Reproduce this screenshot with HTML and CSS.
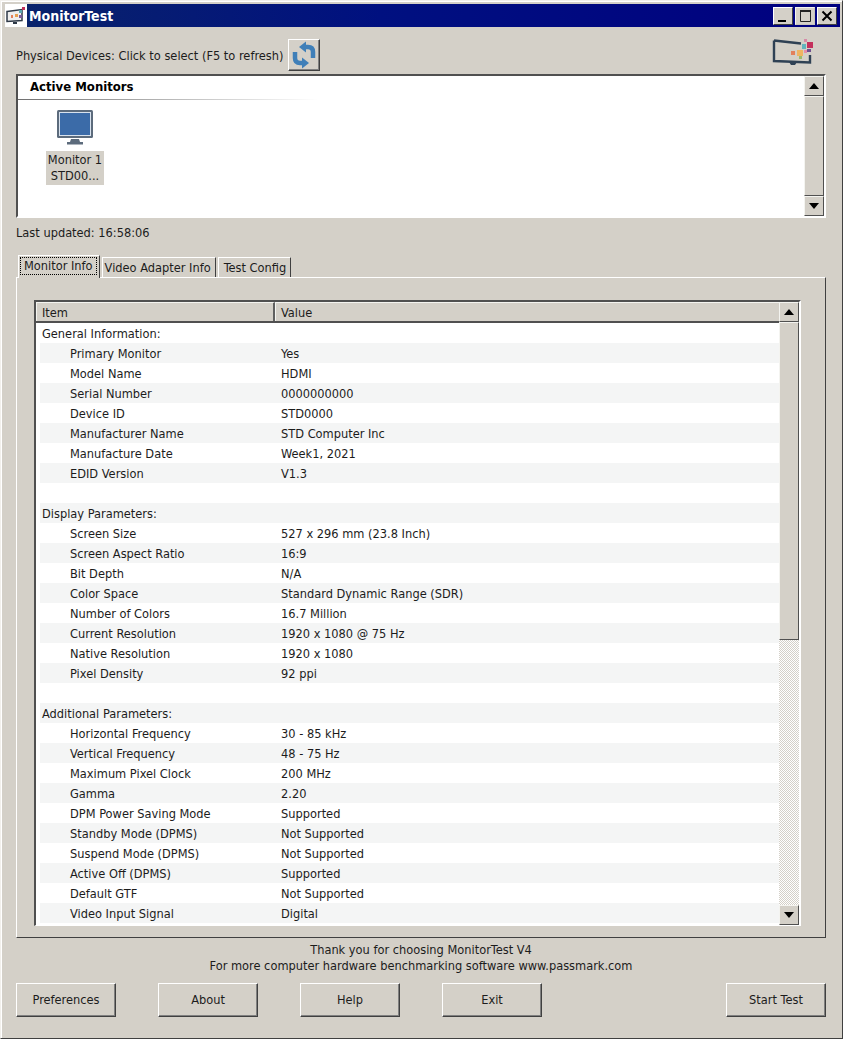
FILE: index.html
```html
<!DOCTYPE html>
<html lang="en">
<head>
<meta charset="utf-8">
<title>MonitorTest</title>
<link rel="stylesheet" href="styles.css">
</head>
<body>
<div class="window">
  <header class="titlebar">
    <svg class="app-icon" viewBox="0 0 22 23" width="22" height="23"><rect width="22" height="23" fill="#fff"/><path d="M2 7.500l15-2v11l-15 1z" fill="#eee" stroke="#2f3a48" stroke-width="1.500"/><path d="M8 18h4v2h-4z" fill="#2f3a48"/><rect x="17" y="3" width="3" height="3" fill="#c2315a"/><rect x="14" y="6" width="3" height="3" fill="#5aa7b0"/><rect x="10" y="10" width="3" height="3" fill="#e8a050"/><rect x="14" y="11" width="3" height="3" fill="#7a5a9a"/><rect x="6" y="11" width="2" height="3" fill="#e2805c"/></svg>
    <span class="title">MonitorTest</span>
    <div class="win-btns">
      <button class="win-btn"><svg viewBox="0 0 16 14" width="16" height="14"><rect x="3" y="11" width="8" height="2" fill="#000"/></svg></button>
      <button class="win-btn flat"><svg viewBox="0 0 16 16" width="16" height="16"><path d="M3.500 2.500h10v11h-10z" fill="none" stroke="#222"/><rect x="3" y="2" width="11" height="2" fill="#222"/></svg></button>
      <button class="win-btn"><svg viewBox="0 0 16 14" width="16" height="14"><path d="M3.500 2.500l9 9M12.500 2.500l-9 9" stroke="#000" stroke-width="2" fill="none"/></svg></button>
    </div>
  </header>

  <main class="content">
    <div class="device-row">
      <span class="device-label">Physical Devices: Click to select (F5 to refresh)</span>
      <button class="refresh">
        <svg viewBox="0 0 28 28" width="28" height="28"><path d="M23 17V11Q23 6 18 6H14" fill="none" stroke="#3f7fb8" stroke-width="4.500"/><path d="M16 0.500L9 6l7 5.500z" fill="#3f7fb8"/><path d="M5 11V17Q5 22 10 22H14" fill="none" stroke="#3f7fb8" stroke-width="4.500"/><path d="M12 16.500L19 22l-7 5.500z" fill="#3f7fb8"/></svg>
      </button>
      <svg class="logo" viewBox="0 0 44 30" width="44" height="30"><path d="M2 3.500L29 6.500M38 18v7.500L2 24V3.500" fill="none" stroke="#2f4154" stroke-width="2.400"/><path d="M17 25h8l-2 3h-4z" fill="#2f4154"/><rect x="35" y="5" width="6" height="6" fill="#c4305c"/><rect x="30" y="7" width="4" height="5" fill="#62b3bd"/><rect x="32" y="2" width="3" height="3" fill="#d88aa8"/><rect x="35" y="12" width="4" height="3" fill="#6f4f8f"/><rect x="25" y="13" width="6" height="6" fill="#efb462"/><rect x="19" y="14" width="4" height="4" fill="#e2805c"/><rect x="32" y="13" width="3" height="3" fill="#e58ca8"/><rect x="27" y="19" width="3" height="3" fill="#9dbb6a"/></svg>
    </div>

    <section class="monitors">
      <div class="monitors-list">
        <h2 class="group-head">Active Monitors</h2>
        <div class="group-line"></div>
        <div class="monitor-item">
          <svg viewBox="0 0 36 36" width="36" height="36"><rect width="36" height="28" rx="1.500" fill="#5c6b7c"/><rect x="2.500" y="2.500" width="31" height="23" fill="#3b6ba8" stroke="#d8e2ee"/><path d="M14 29h8l1 3h-10z" fill="#5c6b7c"/><rect x="10" y="32" width="16" height="2.500" fill="#5c6b7c"/></svg>
          <div class="monitor-name">Monitor 1<br>STD00...</div>
        </div>
      </div>
      <div class="scrollbar">
        <button class="sb-btn"><span class="arrow up"></span></button>
        <div class="sb-thumb"></div>
        <button class="sb-btn"><span class="arrow down"></span></button>
      </div>
    </section>

    <p class="updated">Last updated: 16:58:06</p>

    <nav class="tabs">
      <div class="tab active"><span class="focus">Monitor Info</span></div>
      <div class="tab">Video Adapter Info</div>
      <div class="tab">Test Config</div>
    </nav>

    <section class="panel">
      <div class="table">
        <div class="table-main">
          <div class="thead">
            <div class="th item">Item</div>
            <div class="th value">Value</div>
          </div>
          <div class="rows">
            <div class="row"><span class="k head">General Information:</span><span class="v"></span></div>
            <div class="row"><span class="k">Primary Monitor</span><span class="v">Yes</span></div>
            <div class="row"><span class="k">Model Name</span><span class="v">HDMI</span></div>
            <div class="row"><span class="k">Serial Number</span><span class="v">0000000000</span></div>
            <div class="row"><span class="k">Device ID</span><span class="v">STD0000</span></div>
            <div class="row"><span class="k">Manufacturer Name</span><span class="v">STD Computer Inc</span></div>
            <div class="row"><span class="k">Manufacture Date</span><span class="v">Week1, 2021</span></div>
            <div class="row"><span class="k">EDID Version</span><span class="v">V1.3</span></div>
            <div class="row"><span class="k"></span><span class="v"></span></div>
            <div class="row"><span class="k head">Display Parameters:</span><span class="v"></span></div>
            <div class="row"><span class="k">Screen Size</span><span class="v">527 x 296 mm (23.8 Inch)</span></div>
            <div class="row"><span class="k">Screen Aspect Ratio</span><span class="v">16:9</span></div>
            <div class="row"><span class="k">Bit Depth</span><span class="v">N/A</span></div>
            <div class="row"><span class="k">Color Space</span><span class="v">Standard Dynamic Range (SDR)</span></div>
            <div class="row"><span class="k">Number of Colors</span><span class="v">16.7 Million</span></div>
            <div class="row"><span class="k">Current Resolution</span><span class="v">1920 x 1080 @ 75 Hz</span></div>
            <div class="row"><span class="k">Native Resolution</span><span class="v">1920 x 1080</span></div>
            <div class="row"><span class="k">Pixel Density</span><span class="v">92 ppi</span></div>
            <div class="row"><span class="k"></span><span class="v"></span></div>
            <div class="row"><span class="k head">Additional Parameters:</span><span class="v"></span></div>
            <div class="row"><span class="k">Horizontal Frequency</span><span class="v">30 - 85 kHz</span></div>
            <div class="row"><span class="k">Vertical Frequency</span><span class="v">48 - 75 Hz</span></div>
            <div class="row"><span class="k">Maximum Pixel Clock</span><span class="v">200 MHz</span></div>
            <div class="row"><span class="k">Gamma</span><span class="v">2.20</span></div>
            <div class="row"><span class="k">DPM Power Saving Mode</span><span class="v">Supported</span></div>
            <div class="row"><span class="k">Standby Mode (DPMS)</span><span class="v">Not Supported</span></div>
            <div class="row"><span class="k">Suspend Mode (DPMS)</span><span class="v">Not Supported</span></div>
            <div class="row"><span class="k">Active Off (DPMS)</span><span class="v">Supported</span></div>
            <div class="row"><span class="k">Default GTF</span><span class="v">Not Supported</span></div>
            <div class="row"><span class="k">Video Input Signal</span><span class="v">Digital</span></div>
          </div>
        </div>
        <div class="scrollbar checker">
          <button class="sb-btn"><span class="arrow up"></span></button>
          <div class="sb-thumb tall"></div>
          <div class="sb-track"></div>
          <button class="sb-btn"><span class="arrow down"></span></button>
        </div>
      </div>
    </section>

    <p class="thanks">Thank you for choosing MonitorTest V4<br>For more computer hardware benchmarking software www.passmark.com</p>

    <div class="actions">
      <button class="btn">Preferences</button>
      <button class="btn">About</button>
      <button class="btn">Help</button>
      <button class="btn">Exit</button>
      <button class="btn start">Start Test</button>
    </div>
  </main>
</div>
</body>
</html>
```
FILE: styles.css
```css
* { box-sizing: border-box; }
html, body { margin: 0; height: 100%; }
body {
  background: #d4d0c8;
  color: #1c1c1c;
  font: 12.7px/16px "DejaVu Sans Condensed", "DejaVu Sans", sans-serif;
  overflow: hidden;
}
button { font: inherit; color: inherit; padding: 0; margin: 0; }
p, h2 { margin: 0; }

.window {
  height: 1039px;
  padding: 3px 2px 0 4px;
  border: 1px solid #d4d0c8;
  border-top-color: #f2f0ec;
  border-left-color: #f2f0ec;
  border-right-color: #404040;
  border-bottom-color: #404040;
  box-shadow: inset 1px 1px 0 #fff;
  display: flex;
  flex-direction: column;
}

.titlebar {
  height: 23px;
  flex: none;
  display: flex;
  align-items: center;
  background: linear-gradient(90deg, #0a246a 0%, #001080 45%, #000080 100%);
}
.app-icon { flex: none; margin-right: 2px; }
.title { color: #fff; font: bold 14px/22px "DejaVu Sans Condensed", sans-serif; }
.win-btns { margin-left: auto; display: flex; gap: 2px; margin-right: 3px; }
.win-btn {
  width: 20px; height: 18px;
  background: #d4d0c8;
  border: 1px solid;
  border-color: #fff #404040 #404040 #fff;
  display: flex; align-items: center; justify-content: center;
}
.win-btn.flat { border-color: #f4f4f0 #c8c4bc #c8c4bc #f4f4f0; }

.content {
  flex: 1;
  display: flex;
  flex-direction: column;
  padding: 0 14px 0 11px;
}

.device-row {
  display: flex;
  align-items: center;
  height: 32px;
  margin-top: 12px;
  gap: 5px;
}
.device-label { position: relative; top: 1px; }
.refresh {
  width: 32px; height: 32px;
  background: #d4d0c8;
  border: 1px solid;
  border-color: #fff #404040 #404040 #fff;
  box-shadow: inset -1px -1px 0 #808080;
  display: flex; align-items: center; justify-content: center;
}
.logo { margin-left: auto; margin-right: 10px; margin-top: -7px; }

.monitors {
  margin-top: 3px;
  height: 144px;
  display: flex;
  background: #fff;
  border: 2px solid;
  border-color: #505050 #fff #fff #505050;
}
.monitors-list { flex: 1; padding-top: 1px; }
.group-head { font: bold 13px/20px "DejaVu Sans Condensed", sans-serif; color: #000; padding-left: 12px; }
.group-line { height: 1px; margin-top: 2px; width: 300px; background: linear-gradient(90deg, #707070, #fff); }
.monitor-item {
  width: 58px;
  margin: 10px 0 0 28px;
  display: flex; flex-direction: column; align-items: center;
}
.monitor-name {
  margin-top: 5px;
  width: 58px;
  padding: 1px 0;
  background: #d4d0c8;
  text-align: center;
  white-space: nowrap;
}

.scrollbar {
  width: 20px;
  flex: none;
  display: flex;
  flex-direction: column;
  background: #d4d0c8;
}
.sb-btn {
  width: 20px; height: 20px; flex: none;
  background: #d4d0c8;
  border: 1px solid;
  border-color: #f4f4f0 #505050 #505050 #f4f4f0;
  display: flex; align-items: center; justify-content: center;
}
.sb-thumb {
  flex: 1;
  background: #d4d0c8;
  border: 1px solid;
  border-color: #f4f4f0 #505050 #505050 #f4f4f0;
}
.sb-thumb.tall { flex: none; height: 318px; }
.sb-track {
  flex: 1;
  background: repeating-conic-gradient(#d4d0c8 0 25%, #fff 0 50%) 0 0 / 2px 2px;
}
.arrow { width: 0; height: 0; border-left: 5px solid transparent; border-right: 5px solid transparent; }
.arrow.up { border-bottom: 6px solid #000; }
.arrow.down { border-top: 6px solid #000; }

.updated { margin-top: 7px; height: 16px; }

.tabs {
  display: flex;
  align-items: flex-end;
  height: 23px;
  margin-top: 13px;
  padding-left: 2px;
  gap: 2px;
  position: relative;
  z-index: 1;
}
.tab {
  height: 20px;
  padding: 2px 4px 0 2px;
  border: 1px solid;
  border-color: #fff #404040 transparent #fff;
  border-bottom: 0;
  white-space: nowrap;
}
.tab:last-child { padding-left: 5px; padding-right: 4px; }
.tab.active {
  height: 23px;
  padding: 1px 2px 0 1px;
  margin-bottom: -1px;
  background: #d4d0c8;
}
.focus { display: block; border: 1px dotted #000; padding: 0 3px; line-height: 16px; height: 18px; }

.panel {
  height: 661px;
  border: 1px solid;
  border-color: #fff #404040 #404040 #fff;
  padding: 22px 24px 0 17px;
}

.table {
  height: 626px;
  display: flex;
  background: #fff;
  border: 2px solid;
  border-color: #505050 #fff #fff #505050;
  border-bottom-width: 1px;
}
.table-main { flex: 1; min-width: 0; }
.thead { display: flex; height: 21px; background: #d4d0c8; border-bottom: 2px solid #505050; }
.th { padding: 2px 0 0 5px; line-height: 16px; border-top: 1px solid #f4f4f0; border-left: 1px solid #f4f4f0; }
.th.item { width: 239px; border-right: 2px solid #606060; }
.th.value { flex: 1; padding-left: 5px; }

.rows { overflow: hidden; }
.row { display: flex; height: 20px; align-items: center; margin-left: 4px; padding-top: 2px; line-height: 16px; }
.row:nth-child(even) { background: #f4f5f5; }
.k { width: 238px; padding-left: 30px; flex: none; white-space: nowrap; }
.k.head { padding-left: 2px; }
.v { padding-left: 3px; white-space: nowrap; }

.thanks { text-align: center; margin-top: 4px; height: 32px; }

.actions { display: flex; gap: 42px; margin-top: 9px; }
.btn {
  width: 100px; height: 34px;
  background: #d4d0c8;
  border: 1px solid;
  border-color: #fff #404040 #404040 #fff;
  box-shadow: inset -1px -1px 0 #808080;
}
.btn.start { margin-left: auto; }
```
